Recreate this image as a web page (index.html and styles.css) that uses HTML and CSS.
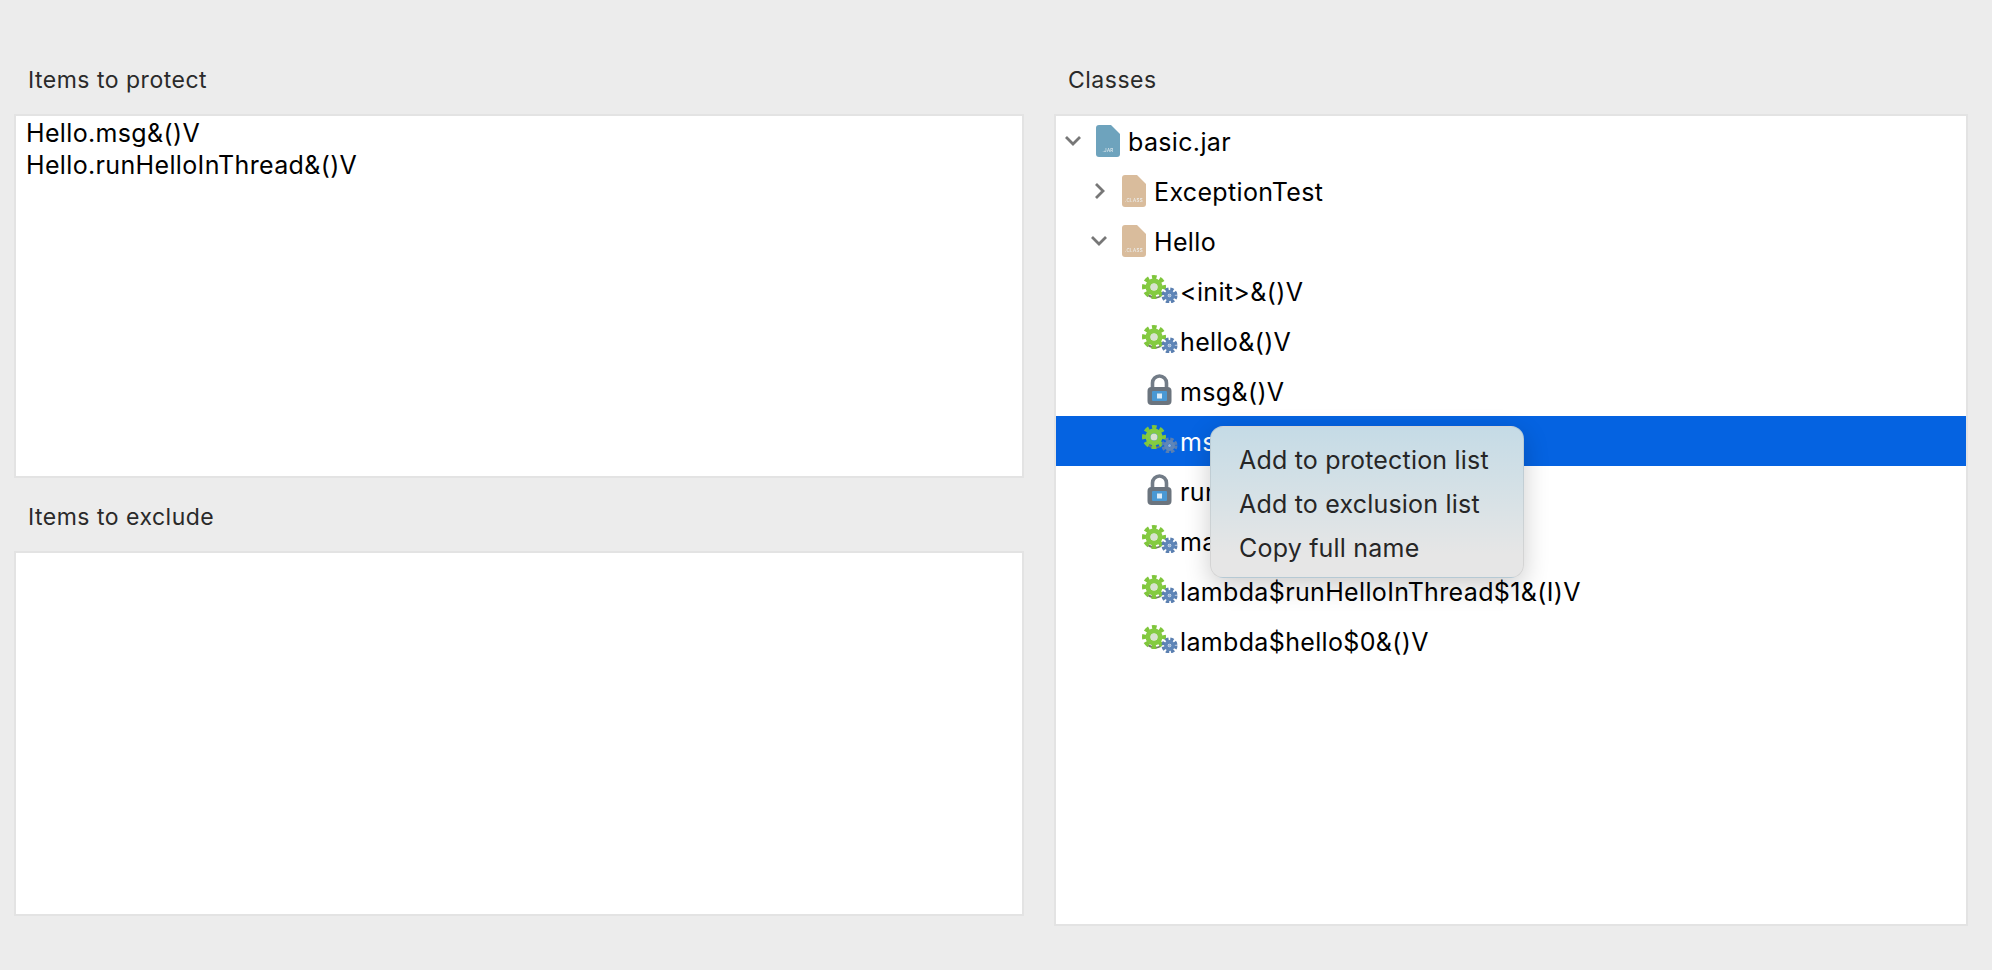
FILE: index.html
```html
<!DOCTYPE html>
<html>
<head>
    <meta charset="utf-8">
    <title>Obfuscation items</title>
    <link rel="stylesheet" href="styles.css">
</head>
<body>
<!--icons used in the tree-->
<svg class="defs" width="0" height="0">
    <symbol id="gear" viewBox="0 0 36 28">
        <path d="M5 19a11 11 0 0 0 14 2" fill="none" stroke="#737c6c" stroke-width="2"/>
        <circle cx="12" cy="12" r="9.500" fill="none" stroke="#7fc63c" stroke-width="5" stroke-dasharray="4.400 3.060" stroke-dashoffset="2.200"/>
        <circle cx="12" cy="12" r="6" fill="none" stroke="#84cb42" stroke-width="5"/>
        <circle cx="12" cy="12" r="3.500" fill="#d8e2cf"/>
        <circle cx="27.500" cy="20.500" r="6.200" fill="none" stroke="#5a7fb0" stroke-width="3.600" stroke-dasharray="3.200 1.670"/>
        <circle cx="27.500" cy="20.500" r="3.600" fill="none" stroke="#5f86b8" stroke-width="3.600"/>
        <circle cx="27.500" cy="20.500" r="1.500" fill="#9db6d3"/>
    </symbol>
    <symbol id="lock" viewBox="0 0 25 31">
        <path d="M5.500 15V9a7 7 0 0 1 14 0v6" fill="none" stroke="#727c87" stroke-width="3.600"/>
        <rect x="0.500" y="13" width="24" height="18" rx="4" fill="#6b747e"/>
        <rect x="5" y="17" width="15" height="10" rx="1" fill="#4a98d3"/>
        <rect x="10" y="19.500" width="5" height="5" fill="#dcecf7"/>
    </symbol>
    <symbol id="chev-down" viewBox="0 0 18 18">
        <polyline points="2,5 9,12 16,5" fill="none" stroke="#777" stroke-width="2.800"/>
    </symbol>
    <symbol id="chev-right" viewBox="0 0 18 18">
        <polyline points="6,2 13,9 6,16" fill="none" stroke="#777" stroke-width="2.800"/>
    </symbol>
</svg>

<div class="page">
    <div class="col-left">
        <div class="label">Items to protect</div>
        <div class="box box-protect">
            <div class="item">Hello.msg&amp;()V</div>
            <div class="item">Hello.runHelloInThread&amp;()V</div>
        </div>
        <div class="label label-second">Items to exclude</div>
        <div class="box box-exclude"></div>
    </div>

    <div class="col-right">
        <div class="label">Classes</div>
        <div class="box box-tree">
            <div class="row lvl0">
                <svg class="chev"><use href="#chev-down"/></svg>
                <svg class="file" viewBox="0 0 24 32"><path class="jar" d="M3 0h12l9 9v20a3 3 0 0 1-3 3H3a3 3 0 0 1-3-3V3a3 3 0 0 1 3-3z"/><text class="file-tag" x="12" y="27">.JAR</text></svg>
                <span>basic.jar</span>
            </div>
            <div class="row lvl1">
                <svg class="chev"><use href="#chev-right"/></svg>
                <svg class="file" viewBox="0 0 24 32"><path class="cls" d="M3 0h12l9 9v20a3 3 0 0 1-3 3H3a3 3 0 0 1-3-3V3a3 3 0 0 1 3-3z"/><text class="file-tag" x="12" y="27">.CLASS</text></svg>
                <span>ExceptionTest</span>
            </div>
            <div class="row lvl1">
                <svg class="chev"><use href="#chev-down"/></svg>
                <svg class="file" viewBox="0 0 24 32"><path class="cls" d="M3 0h12l9 9v20a3 3 0 0 1-3 3H3a3 3 0 0 1-3-3V3a3 3 0 0 1 3-3z"/><text class="file-tag" x="12" y="27">.CLASS</text></svg>
                <span>Hello</span>
            </div>
            <div class="row lvl2"><svg class="gear"><use href="#gear"/></svg><span>&lt;init&gt;&amp;()V</span></div>
            <div class="row lvl2"><svg class="gear"><use href="#gear"/></svg><span>hello&amp;()V</span></div>
            <div class="row lvl2"><svg class="lock"><use href="#lock"/></svg><span>msg&amp;()V</span></div>
            <div class="row lvl2 selected"><svg class="gear"><use href="#gear"/></svg><span>ms</span></div>
            <div class="row lvl2"><svg class="lock"><use href="#lock"/></svg><span>run</span></div>
            <div class="row lvl2"><svg class="gear"><use href="#gear"/></svg><span>ma</span></div>
            <div class="row lvl2"><svg class="gear"><use href="#gear"/></svg><span>lambda$runHelloInThread$1&amp;(I)V</span></div>
            <div class="row lvl2"><svg class="gear"><use href="#gear"/></svg><span>lambda$hello$0&amp;()V</span></div>

            <div class="menu">
                <div class="menu-item">Add to protection list</div>
                <div class="menu-item">Add to exclusion list</div>
                <div class="menu-item">Copy full name</div>
            </div>
        </div>
    </div>
</div>
</body>
</html>
```

FILE: styles.css
```css
html, body {
    margin: 0;
    height: 100%;
    background: #ececec;
}
body {
    font-family: Inter, "Liberation Sans", sans-serif;
    color: #000;
    overflow: hidden;
}
.defs {
    display: block;
    height: 0;
}
.page {
    display: grid;
    grid-template-columns: 1010px 914px;
    column-gap: 30px;
    padding: 59px 0 0 14px;
}
.label {
    height: 40px;
    line-height: 42px;
    margin-bottom: 15px;
    padding-left: 14px;
    font-size: 23px;
    letter-spacing: 0.5px;
    color: #2a2a2a;
}
.label-second {
    margin-top: 18px;
}
.box {
    box-sizing: border-box;
    background: #fff;
    border: 2px solid #e3e3e3;
}
.box-protect { height: 364px; padding: 1px 0 0 10px; }
.box-exclude { height: 365px; }
.box-tree { height: 812px; position: relative; }
.item {
    height: 32px;
    line-height: 32px;
    font-size: 25px;
    letter-spacing: 0.35px;
}
.row {
    display: flex;
    align-items: center;
    height: 50px;
    font-size: 25px;
    letter-spacing: 0.35px;
    white-space: nowrap;
}
.row span {
    padding-top: 2px;
}
.lvl0 { padding-left: 8px; }
.lvl1 { padding-left: 34px; }
.lvl2 { padding-left: 86px; }
.selected {
    background: #0563e1;
    color: #fff;
}
.chev {
    width: 18px;
    height: 18px;
    margin-right: 14px;
    flex: none;
}
.file {
    width: 24px;
    height: 32px;
    margin-right: 8px;
    flex: none;
    filter: blur(0.4px);
}
.jar { fill: #6ea3bd; }
.cls { fill: #d9bc9c; }
.file-tag {
    font-size: 4.5px;
    text-anchor: middle;
    fill: #eef3f5;
}
.gear {
    width: 36px;
    height: 28px;
    margin: -4px 2px 0 0;
    flex: none;
    filter: blur(0.5px);
}
.lock {
    width: 25px;
    height: 31px;
    margin: -3px 8px 0 5px;
    flex: none;
    filter: blur(0.5px);
}
.menu {
    position: absolute;
    left: 154px;
    top: 310px;
    box-sizing: border-box;
    width: 314px;
    height: 152px;
    padding: 11px 0 0 28px;
    border-radius: 13px;
    border: 1px solid rgba(0, 0, 0, 0.08);
    background: linear-gradient(#c5dbe6, #d6e1e6 45%, #e6e6e6 85%);
    box-shadow: 0 8px 26px rgba(0, 0, 0, 0.2);
}
.menu-item {
    height: 44px;
    line-height: 44px;
    font-size: 25px;
    letter-spacing: 0.2px;
    color: #262626;
}
```
